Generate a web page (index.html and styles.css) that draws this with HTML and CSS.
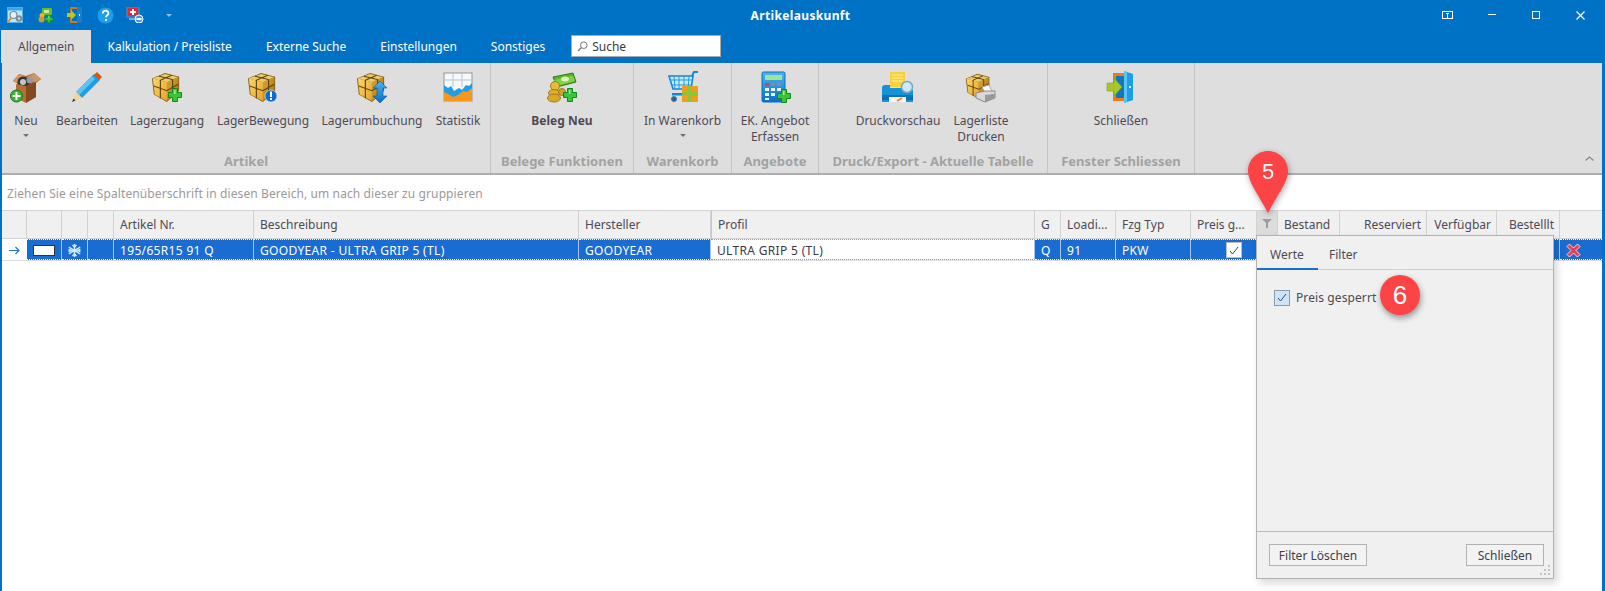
FILE: index.html
```html
<!DOCTYPE html>
<html lang="de">
<head>
<meta charset="utf-8">
<title>Artikelauskunft</title>
<link rel="stylesheet" href="styles.css">
</head>
<body>
<svg class="defs" aria-hidden="true">
  <defs>
    <linearGradient id="gLeft" x1="0" y1="0" x2="1" y2="1"><stop offset="0" stop-color="#fbd768"/><stop offset="1" stop-color="#e5a52a"/></linearGradient>
    <linearGradient id="gRight" x1="0" y1="0" x2="1" y2="1"><stop offset="0" stop-color="#dba636"/><stop offset="1" stop-color="#a8741a"/></linearGradient>
    <linearGradient id="gBlue" x1="0" y1="0" x2="0" y2="1"><stop offset="0" stop-color="#4cb4f2"/><stop offset="1" stop-color="#0b6ec4"/></linearGradient>
    <symbol id="cube" viewBox="0 0 32 32">
      <path d="M1 7 15 1l15 4v15L17 32 3 24z" fill="#8a6212"/>
      <path d="M2 7 15 2l14 3.500L17 11z" fill="#eccb6a"/>
      <path d="M2 7l15 4v20L4 24z" fill="url(#gLeft)"/>
      <path d="M17 11l12-5.500V20L17 31z" fill="url(#gRight)"/>
      <path d="M8.500 4.500 23 8M22 3.500 9.500 9M3 15l14 5 12-7M10 9v19M23 8v17" fill="none" stroke="#5f430f" stroke-width="1.200"/>
    </symbol>
    <symbol id="plus" viewBox="0 0 14 14">
      <path d="M4.500 .5h5v4h4v5h-4v4h-5v-4h-4v-5h4z" fill="#39c43a" stroke="#0f8a1e"/>
      <path d="M6 2h1.500v4H6z" fill="#a6ec8c"/>
    </symbol>
  </defs>
</svg>

<div class="window">
  <header class="titlebar">
    <div class="qat">
      <span class="qat-btn"><svg width="16" height="16" viewBox="0 0 16 16"><rect x=".5" y=".5" width="15" height="15" fill="#bfe4fa" stroke="#4fb0ea"/><rect x="1" y="1" width="14" height="2.500" fill="#39a5ea"/><circle cx="6.500" cy="8" r="3.500" fill="#dff1fb" stroke="#7d8a96" stroke-width="1.200"/><path d="M4 11 1 15" stroke="#e58a2a" stroke-width="1.800"/><circle cx="12" cy="11.500" r="3.200" fill="#7f8a94"/><circle cx="12" cy="11.500" r="1.200" fill="#d5dbe0"/></svg></span>
      <span class="qat-btn"><svg width="16" height="16" viewBox="0 0 16 16"><rect x="5" y="1" width="10" height="7" rx="1" fill="#6cb92e"/><rect x="7" y="3" width="5" height="3" fill="#c9ef9c"/><circle cx="5" cy="8.500" r="2.500" fill="#e6b82c"/><circle cx="4.500" cy="12.500" r="3" fill="#caa023"/><use href="#plus" x="8" y="8" width="8" height="8"/></svg></span>
      <span class="qat-btn"><svg width="16" height="16" viewBox="0 0 16 16"><path d="M3 0h8v2H5v12h6v2H3z" fill="#c9772a"/><rect x="10" y="0" width="5" height="16" fill="#1a7fc7"/><rect x="12" y="7" width="1" height="2" fill="#fff"/><path d="M0 6h4V3l5 5-5 5v-3H0z" fill="#b7c823"/></svg></span>
      <span class="qat-btn"><svg width="17" height="17" viewBox="0 0 17 17"><circle cx="8.500" cy="8.500" r="8" fill="#1f9dea"/><path d="M5.800 6.500c0-3.700 5.600-3.700 5.600-.3 0 2.100-2.400 2.100-2.400 4M9 12v2" fill="none" stroke="#fff" stroke-width="1.800"/></svg></span>
      <span class="qat-btn"><svg width="18" height="16" viewBox="0 0 18 16"><rect x="0" y="0" width="14" height="11" fill="#3f7db8"/><rect x="2" y="1" width="10" height="8" rx="1" fill="#e8272f"/><path d="M6 2h2v2h2v2H8v2H6V6H4V4h2z" fill="#fff"/><rect x="3" y="11" width="8" height="2" fill="#7fa9cc"/><circle cx="13" cy="12" r="4" fill="#3b9be0" stroke="#fff"/><rect x="10.500" y="11" width="5" height="2" fill="#fff"/></svg></span>
      <span class="qat-btn"><span class="qat-arrow"></span></span>
    </div>
    <div class="title">Artikelauskunft</div>
    <div class="winctrls">
      <span class="winbtn"><svg width="12" height="9" viewBox="0 0 12 9"><rect x=".5" y=".5" width="10" height="7" fill="none" stroke="#fff"/><path d="M4 2.500h3M5.500 2v6" stroke="#fff"/></svg></span>
      <span class="winbtn"><svg width="8" height="2" viewBox="0 0 8 2"><rect width="8" height="1" fill="#fff"/></svg></span>
      <span class="winbtn"><svg width="8" height="8" viewBox="0 0 8 8"><rect x=".5" y=".5" width="7" height="7" fill="none" stroke="#fff"/></svg></span>
      <span class="winbtn"><svg width="9" height="9" viewBox="0 0 9 9"><path d="M.5.500l8 8M8.500.500l-8 8" stroke="#fff" stroke-width="1.200"/></svg></span>
    </div>
  </header>

  <nav class="tabs">
    <span class="tab tab-active">Allgemein</span>
    <span class="tab">Kalkulation / Preisliste</span>
    <span class="tab">Externe Suche</span>
    <span class="tab">Einstellungen</span>
    <span class="tab">Sonstiges</span>
    <div class="search">
      <svg width="11" height="11" viewBox="0 0 11 11"><circle cx="6.800" cy="4.200" r="3.300" fill="none" stroke="#777"/><path d="M4.500 6.500 1 10" stroke="#777" stroke-width="1.300"/></svg>
      <span>Suche</span>
    </div>
  </nav>

  <section class="ribbon">
    <div class="group group-artikel">
      <div class="items">
        <div class="item">
          <svg class="icon" width="32" height="32" viewBox="0 0 32 32"><path d="M3 10l6-7 7 2 8-3 7 6-5 4v14l-9 5-10-5V12z" fill="#a9622c"/><path d="M3 10l6-7 7 3-5 7zM17 6l7-4 7 6-7 4z" fill="#cf9660"/><path d="M9 11l7-4 8 4-8 4z" fill="#4a2b14"/><circle cx="13" cy="11" r="5.500" fill="#333"/><circle cx="13" cy="11" r="3" fill="#c4c4c4"/><circle cx="20" cy="9" r="3.500" fill="#9a9a9a"/><path d="M16 15l10-4v15l-10 6z" fill="#86481f"/><path d="M6 13l10 2v17l-10-5z" fill="#b56f36"/><circle cx="6.500" cy="25" r="6" fill="#3eb437" stroke="#0e7a1e"/><path d="M5.500 21h2v3h3v2h-3v3h-2v-3h-3v-2h3z" fill="#fff"/></svg>
          <span>Neu</span><i class="caret"></i>
        </div>
        <div class="item">
          <svg class="icon" width="32" height="32" viewBox="0 0 32 32"><path d="M5 21 23 3l6 6L11 27z" fill="#1e9fe0"/><path d="M5 21 21 5l3 3L8 24z" fill="#5cc3f2"/><path d="M23 4l3-3 5 5-3 3z" fill="#d95514"/><path d="M5 21l6 6-10 4z" fill="#f1d596"/><path d="M1 31l3.500-1.500-2-2z" fill="#333"/></svg>
          <span>Bearbeiten</span>
        </div>
        <div class="item">
          <svg class="icon" width="32" height="32" viewBox="0 0 32 32"><use href="#cube" width="30" height="32"/><use href="#plus" x="17" y="17" width="14" height="14"/></svg>
          <span>Lagerzugang</span>
        </div>
        <div class="item">
          <svg class="icon" width="32" height="32" viewBox="0 0 32 32"><use href="#cube" width="30" height="32"/><circle cx="24" cy="25" r="6" fill="#0f6ad0" stroke="#e8f2ff" stroke-width=".6"/><rect x="23" y="20.500" width="2" height="5.500" fill="#fff"/><rect x="23" y="27" width="2" height="2" fill="#fff"/></svg>
          <span>LagerBewegung</span>
        </div>
        <div class="item">
          <svg class="icon" width="32" height="32" viewBox="0 0 32 32"><use href="#cube" width="30" height="32"/><path d="M24 10l7 7h-4v8h4l-7 7-7-7h4v-8h-4z" fill="url(#gBlue)" stroke="#0a55a5" stroke-width=".6"/></svg>
          <span>Lagerumbuchung</span>
        </div>
        <div class="item">
          <svg class="icon" width="32" height="32" viewBox="0 0 32 32"><rect x="2" y="2" width="28" height="28" fill="#f6f8fa" stroke="#8a98a4"/><path d="M11 2v14M20 2v14M2 9h28" stroke="#b9c4cc"/><path d="M2 14l4 3 3-2 3 5 5-3 3 2 4-5 3 1 3-3v18H2z" fill="#1e9fe4"/><path d="M2 30V21l4 2 5 3 5-2 5-4 4 1 5-4v13z" fill="#f9971c"/></svg>
          <span>Statistik</span>
        </div>
      </div>
      <div class="group-label">Artikel</div>
    </div>

    <div class="group group-belege">
      <div class="items">
        <div class="item item-bold">
          <svg class="icon" width="32" height="32" viewBox="0 0 32 32"><path d="M7 6 27 2l3 9-19 5z" fill="#5cb32e" stroke="#2f7a17"/><path d="M8 9l19-4 2 5-18 5z" fill="#7dd24a"/><ellipse cx="19" cy="8" rx="4" ry="2.500" fill="#dbf4b8"/><circle cx="9" cy="15" r="4.500" fill="#e8bc3a" stroke="#a07b18"/><ellipse cx="8" cy="22" rx="5.500" ry="3.500" fill="#e0b02c" stroke="#a07b18"/><ellipse cx="8" cy="27" rx="6.500" ry="4" fill="#d9a826" stroke="#a07b18"/><circle cx="16" cy="21" r="3.500" fill="#cfa12a" stroke="#a07b18"/><use href="#plus" x="17" y="17" width="14" height="14"/></svg>
          <span>Beleg Neu</span>
        </div>
      </div>
      <div class="group-label">Belege Funktionen</div>
    </div>

    <div class="group group-waren">
      <div class="items">
        <div class="item">
          <svg class="icon" width="32" height="32" viewBox="0 0 32 32"><path d="M2 5h24l-2 13H6z" fill="#cbe9fb" stroke="#1487d6" stroke-width="1.600"/><path d="M7 5l1 13M12 5v13M17 5v13M22 5l-1 13M3 9h22M4 14h20" stroke="#1e9be3"/><path d="M25 5l2-4h4" fill="none" stroke="#1487d6" stroke-width="2"/><rect x="5" y="22" width="17" height="2.500" fill="#1487d6"/><circle cx="7" cy="28" r="2.500" fill="#556" stroke="#1487d6"/><rect x="15" y="15" width="16" height="16" fill="#f59c1a"/><path d="M21 15h4v6h6v4h-6v6h-4v-6h-6v-4h6z" fill="#8fc43a"/></svg>
          <span>In Warenkorb</span><i class="caret"></i>
        </div>
      </div>
      <div class="group-label">Warenkorb</div>
    </div>

    <div class="group group-angebote">
      <div class="items">
        <div class="item">
          <svg class="icon" width="32" height="32" viewBox="0 0 32 32"><rect x="3" y="1" width="23" height="30" rx="1.500" fill="url(#gBlue)" stroke="#0a70c0"/><rect x="6" y="4" width="17" height="5" fill="#9ee58f"/><g fill="#e8f6ff"><rect x="6" y="12" width="4" height="3" fill="#e0403c"/><rect x="12" y="12" width="4" height="3" fill="#8c8c96"/><rect x="18" y="12" width="4" height="3" fill="#8c8c96"/><rect x="6" y="17" width="4" height="3"/><rect x="12" y="17" width="4" height="3"/><rect x="18" y="17" width="4" height="3"/><rect x="6" y="22" width="4" height="3"/><rect x="12" y="22" width="4" height="3"/><rect x="6" y="27" width="4" height="2"/></g><use href="#plus" x="18" y="18" width="14" height="14"/></svg>
          <span>EK. Angebot<br>Erfassen</span>
        </div>
      </div>
      <div class="group-label">Angebote</div>
    </div>

    <div class="group group-druck">
      <div class="items">
        <div class="item">
          <svg class="icon" width="32" height="32" viewBox="0 0 32 32"><rect x="8" y="1" width="15" height="15" fill="#f8cf3d"/><path d="M10 4h11M10 7h11M10 10h11" stroke="#fff29a"/><path d="M0 17q0-3 3-3h5v3h17l6 2v12H0z" fill="#1493d9"/><rect x="0" y="24" width="31" height="5" fill="#0c6fb8"/><rect x="7" y="26" width="17" height="5" fill="#f4f6f8"/><circle cx="25" cy="16" r="5.500" fill="#cfeaf8" stroke="#7fa6c0" stroke-width="1.500"/><path d="M20 27l-5 3" stroke="#e88a22" stroke-width="2"/></svg>
          <span>Druckvorschau</span>
        </div>
        <div class="item">
          <svg class="icon" width="32" height="32" viewBox="0 0 32 32"><use href="#cube" width="26" height="30"/><path d="M17 16l7-2 3 6-7 2z" fill="#fff" stroke="#aaa"/><path d="M11 22l9-2 10 0v7l-10 4-9-4z" fill="#d8d8d8" stroke="#888"/><path d="M20 24l10-1v4l-10 4z" fill="#9a9a9a"/><circle cx="27" cy="24.500" r="1" fill="#3fbf3a"/></svg>
          <span>Lagerliste<br>Drucken</span>
        </div>
      </div>
      <div class="group-label">Druck/Export - Aktuelle Tabelle</div>
    </div>

    <div class="group group-fenster">
      <div class="items">
        <div class="item">
          <svg class="icon" width="32" height="32" viewBox="0 0 32 32"><path d="M8 2h18v28H8z" fill="#1478b8"/><path d="M8 2h12v3h-9v22h9v3H8z" fill="#ee7a1e"/><path d="M19 0l9 3v26l-9 3z" fill="#1e9fe4"/><path d="M19 0l3 1v30l-3 1z" fill="#56c6f5"/><rect x="24" y="15" width="2" height="2" fill="#fff"/><path d="M2 12h7V7l8 9-8 9v-5H2z" fill="#a7c72a" stroke="#7f9c18" stroke-width=".6"/></svg>
          <span>Schließen</span>
        </div>
      </div>
      <div class="group-label">Fenster Schliessen</div>
    </div>

    <div class="ribbon-rest"><svg width="9" height="5" viewBox="0 0 9 5"><path d="M.5 4.500l4-3.500 4 3.500" fill="none" stroke="#8a8a8a" stroke-width="1.300"/></svg></div>
  </section>

  <div class="grouppanel">Ziehen Sie eine Spaltenüberschrift in diesen Bereich, um nach dieser zu gruppieren</div>

  <div class="grid grid-head">
    <div class="th"></div><div class="th"></div><div class="th"></div><div class="th"></div>
    <div class="th">Artikel Nr.</div>
    <div class="th">Beschreibung</div>
    <div class="th">Hersteller</div>
    <div class="th th-profil">Profil</div>
    <div class="th">G</div>
    <div class="th">Loadi...</div>
    <div class="th">Fzg Typ</div>
    <div class="th">Preis g...</div>
    <div class="th th-filter"><svg width="10" height="9" viewBox="0 0 10 9"><path d="M0 0h10L6 4v5H4V4z" fill="#9c9c9c"/></svg></div>
    <div class="th">Bestand</div>
    <div class="th th-right">Reserviert</div>
    <div class="th th-right">Verfügbar</div>
    <div class="th th-right">Bestelllt</div>
    <div class="th th-last"></div>
  </div>

  <div class="grid grid-row">
    <div class="td td-ind"><svg width="11" height="9" viewBox="0 0 11 9"><path d="M0 4.500h10M6.500 1 10 4.500 6.500 8" fill="none" stroke="#1c74d8" stroke-width="1.100"/></svg></div>
    <div class="td td-sel"><span class="swatch"></span></div>
    <div class="td td-sel td-center"><svg width="15" height="15" viewBox="0 0 15 15"><g stroke="#d4ecff" stroke-width="1.500" fill="none"><path d="M7.500 1v13M1.800 4.200l11.400 6.600M1.800 10.800l11.400-6.600"/><path d="M5.500 2l2 2 2-2M5.500 13l2-2 2 2M1.500 6.500l3 1-3 1M13.500 6.500l-3 1 3 1"/></g></svg></div>
    <div class="td td-sel"></div>
    <div class="td td-sel">195/65R15 91 Q</div>
    <div class="td td-sel">GOODYEAR - ULTRA GRIP 5 (TL)</div>
    <div class="td td-sel">GOODYEAR</div>
    <div class="td td-focus">ULTRA GRIP 5 (TL)</div>
    <div class="td td-sel">Q</div>
    <div class="td td-sel">91</div>
    <div class="td td-sel">PKW</div>
    <div class="td td-sel td-center td-span2"><span class="gridcheck"><svg width="10" height="9" viewBox="0 0 10 9"><path d="M1 5l2.500 3L9 1" fill="none" stroke="#444"/></svg></span></div>
    <div class="td td-sel"></div>
    <div class="td td-sel"></div>
    <div class="td td-sel"></div>
    <div class="td td-sel"></div>
    <div class="td td-sel td-del"><svg width="15" height="15" viewBox="0 0 15 15"><path d="M3.500 1 7.500 5l4-4L14 3.500l-4 4 4 4-2.500 2.500-4-4-4 4L1 11.500l4-4-4-4z" fill="#e8404c" stroke="#f6d8da"/></svg></div>
  </div>

  <aside class="popup">
    <div class="pop-tabs">
      <span class="pop-tab pop-tab-active">Werte</span>
      <span class="pop-tab">Filter</span>
    </div>
    <div class="pop-body">
      <label class="pop-check">
        <span class="box"><svg width="10" height="9" viewBox="0 0 10 9"><path d="M1 5l2.500 3L9 1" fill="none" stroke="#3a4a5e"/></svg></span>
        <span class="pop-check-label">Preis gesperrt</span>
      </label>
    </div>
    <div class="pop-foot">
      <span class="btn btn-clear">Filter Löschen</span>
      <span class="btn btn-close">Schließen</span>
    </div>
    <svg class="grip" width="11" height="11" viewBox="0 0 11 11"><g fill="#c4c4c4"><rect x="8" y="0" width="2" height="2"/><rect x="4" y="4" width="2" height="2"/><rect x="8" y="4" width="2" height="2"/><rect x="0" y="8" width="2" height="2"/><rect x="4" y="8" width="2" height="2"/><rect x="8" y="8" width="2" height="2"/></g></svg>
  </aside>

  <div class="pin">
    <svg width="44" height="66" viewBox="0 0 44 66"><path d="M22 2C11 2 2 11 2 22c0 11 12 26 20 42 8-16 20-31 20-42C42 11 33 2 22 2z" fill="#fc4346"/></svg>
    <span class="pin-num">5</span>
  </div>
  <div class="badge">6</div>
</div>
</body>
</html>
```
FILE: styles.css
```css
* { box-sizing: border-box; }
html, body { margin: 0; padding: 0; height: 100%; overflow: hidden; }
body { background: #fff; font: 12px/17px "Noto Sans", Tahoma, sans-serif; color: #4e4a55; }
.defs { position: absolute; width: 0; height: 0; }

.window {
  position: relative;
  width: 1605px;
  height: 591px;
  background: #0072c6;
  padding: 0 3px 0 2px;
  display: flex;
  flex-direction: column;
}

/* title bar */
.titlebar { height: 30px; flex: none; display: grid; grid-template-columns: 1fr auto 1fr; align-items: center; color: #fff; }
.qat { display: flex; align-items: center; margin-left: -2px; }
.qat-btn { width: 30px; height: 30px; display: flex; align-items: center; justify-content: center; }
.qat-arrow { width: 0; height: 0; border: 3px solid transparent; border-top: 3px solid #8fbfe6; border-bottom: 0; margin-left: 7px; }
.title { font-weight: 700; text-align: center; margin-left: -3px; letter-spacing: .35px; }
.winctrls { display: flex; justify-content: flex-end; }
.winbtn { width: 44px; height: 30px; display: flex; align-items: center; justify-content: center; }

/* tabs */
.tabs { height: 33px; flex: none; display: flex; align-items: stretch; color: #fff; margin-left: -1px; }
.tab { padding: 0 17px; display: flex; align-items: center; padding-bottom: 1px; }
.tab-active { background: #dedede; color: #4e4a55; padding-right: 16px; }
.search {
  width: 150px; height: 22px; margin: 5px 0 0 9px;
  background: #fff; border: 1px solid #a9a9a9; color: #3a3a44;
  display: flex; align-items: center; gap: 4px; padding-left: 5px;
}

/* ribbon */
.ribbon { height: 112px; flex: none; display: flex; background: #dedede; border-bottom: 2px solid #aeaeae; }
.group { display: flex; flex-direction: column; border-right: 1px solid #c4c4c4; }
.items { flex: 1; display: grid; grid-auto-flow: column; }
.group-label { height: 21px; font-size: 13px; font-weight: 700; color: #a2a2a2; text-align: center; line-height: 18px; white-space: nowrap; }
.item { display: flex; flex-direction: column; align-items: center; text-align: center; padding-top: 8px; white-space: nowrap; line-height: 16px; }
.icon { flex: none; margin-bottom: 10px; }
.item-bold { font-weight: 700; }
.caret { display: block; width: 0; height: 0; margin-top: 5px; border: 3px solid transparent; border-top: 3px solid #6f6f6f; border-bottom: 0; }
.group-artikel { width: 489px; }
.group-artikel .items { grid-template-columns: 48px 74px 86px 106px 112px 60px; justify-content: start; }
.group-belege { width: 143px; }
.group-waren { width: 98px; }
.group-angebote { width: 87px; }
.group-druck { width: 229px; }
.group-druck .items { grid-template-columns: 84px 82px; justify-content: start; padding-left: 37px; }
.group-fenster { width: 147px; }
.ribbon-rest { flex: 1; display: flex; align-items: flex-end; justify-content: flex-end; padding: 0 8px 12px 0; }

/* group panel */
.grouppanel { height: 35px; flex: none; background: #fff; color: #9a9a9a; padding: 10px 0 0 5px; white-space: nowrap; letter-spacing: .1px; }

/* grid */
.grid { flex: none; display: grid; grid-template-columns: 25px 35px 26px 26px 140px 325px 132px 324px 26px 55px 75px 66px 21px 62px 87px 70px 63px 1fr; }
.grid-head { height: 29px; background: #f0f0f0; border-top: 1px solid #d2d2d2; }
.th { border-right: 1px solid #d2d2d2; border-bottom: 1px solid #d2d2d2; padding: 5px 0 0 6px; white-space: nowrap; overflow: hidden; }
.th-profil { border-left: 1px solid #c8c8c8; }
.th-filter { background: #dcdcdc; padding: 4px 0 0 5px; }
.th-right { text-align: right; padding: 5px 5px 0 0; }
.th-last { border-right: 0; }

.grid-row { height: 22px; background: #fff; border-bottom: 1px solid #dcdcdc; }
.td { white-space: nowrap; padding: 1px 0 0 6px; color: #fff; display: flex; align-items: center; border-right: 1px solid #a9c7ee; letter-spacing: .33px; }
.td-ind { background: #fff; border-right: 0; padding-left: 7px; }
.td-sel { background: #196cd2; border-top: 1px dotted #fff; border-bottom: 1px dotted #fff; }
.td-center { justify-content: center; padding-left: 0; }
.td-span2 { grid-column: span 2; }
.td-focus { background: #fff; color: #3a3a44; border-top: 1px dotted #6f9fdc; border-bottom: 1px dotted #6f9fdc; padding-left: 6px; }
.td-del { padding-left: 6px; border-right: 0; }
.swatch { display: block; width: 22px; height: 11px; background: #fff; border: 1px solid #333; }
.gridcheck { width: 16px; height: 16px; background: #fff; border: 1px solid #bdbdbd; display: flex; align-items: center; justify-content: center; }

/* body fill */
.window::after { content: ""; flex: 1; background: #fff; }

/* popup */
.popup {
  position: absolute; left: 1256px; top: 235px; width: 298px; height: 344px;
  background: #f0f0f0; border: 1px solid #b2b2b2;
  box-shadow: 3px 4px 8px rgba(0,0,0,.16);
  display: flex; flex-direction: column; z-index: 2;
}
.pop-tabs { height: 34px; flex: none; display: flex; border-bottom: 1px solid #cfcfcf; }
.pop-tab { padding: 10px 12px 0 13px; height: 34px; }
.pop-tab-active { width: 61px; border-bottom: 2px solid #196cd2; }
.pop-tab + .pop-tab { padding-left: 11px; }
.pop-body { flex: 1; padding: 19px 0 0 17px; }
.pop-check { display: flex; align-items: center; gap: 6px; }
.pop-check-label { letter-spacing: .1px; }
.box { width: 16px; height: 16px; background: #cde4fb; border: 1px solid #8d9bae; display: flex; align-items: center; justify-content: center; }
.pop-foot { height: 47px; flex: none; border-top: 1px solid #b8b8b8; display: flex; justify-content: space-between; align-items: flex-start; padding: 12px 9px 0 12px; }
.btn { height: 22px; display: flex; align-items: center; justify-content: center; background: #f3f3f3; border: 1px solid #b2b2b2; color: #3f3f4a; }
.btn-clear { width: 98px; }
.btn-close { width: 78px; }
.grip { position: absolute; right: 2px; bottom: 2px; }

/* markers */
.pin { position: absolute; left: 1246px; top: 149px; width: 44px; height: 66px; filter: drop-shadow(1px 2px 3px rgba(0,0,0,.35)); z-index: 3; }
.pin svg { display: block; }
.pin-num { position: absolute; left: 0; right: 0; top: 9px; text-align: center; color: #fff; font: 22px/28px "Liberation Sans", Arial, sans-serif; }
.badge {
  position: absolute; left: 1380px; top: 275px; width: 40px; height: 40px; border-radius: 50%;
  background: #fc4346; color: #fff; text-align: center;
  font: 26px/40px "Liberation Sans", Arial, sans-serif;
  box-shadow: 1px 3px 6px rgba(0,0,0,.4); z-index: 3;
}
```
